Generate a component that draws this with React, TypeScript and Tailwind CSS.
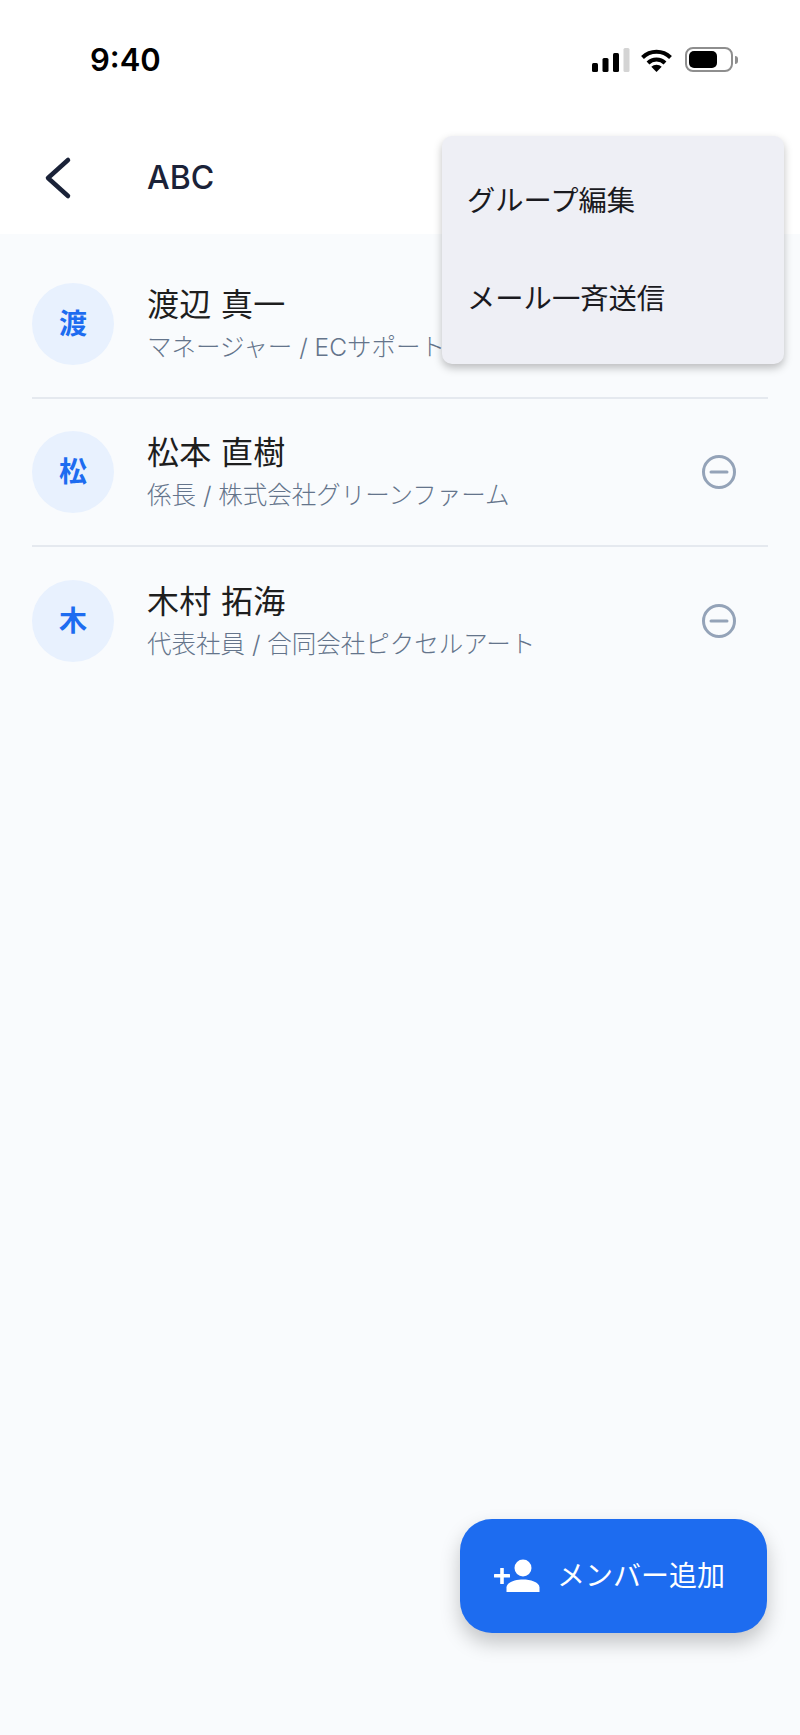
import React from 'react';

const members = [
    { initial: '渡', name: '渡辺 真一', role: 'マネージャー / ECサポート株式会社' },
    { initial: '松', name: '松本 直樹', role: '係長 / 株式会社グリーンファーム' },
    { initial: '木', name: '木村 拓海', role: '代表社員 / 合同会社ピクセルアート' },
];

const StatusIcons = () => (
    <div className="flex items-center">
        <svg width="38" height="24" viewBox="0 0 38 24">
            <rect x="0" y="15" width="6" height="9" rx="1.5" fill="#000" />
            <rect x="10.5" y="10" width="6" height="14" rx="1.5" fill="#000" />
            <rect x="21" y="5" width="6" height="19" rx="1.5" fill="#000" />
            <rect x="31.5" y="0" width="6" height="24" rx="1.5" fill="#d4d4d4" />
        </svg>
        <svg className="ml-[10px]" width="33" height="24" viewBox="0 0 32 24" fill="none">
            <path d="M2 9.5 A20 20 0 0 1 30 9.5" stroke="#000" strokeWidth="4" />
            <path d="M7.5 15 A12 12 0 0 1 24.500 15" stroke="#000" strokeWidth="4" />
            <path d="M16 24 L10.800 18.800 A7.500 7.500 0 0 1 21.200 18.800 Z" fill="#000" />
        </svg>
        <div className="ml-[12px] flex items-center">
            <div className="h-[25px] w-[48px] rounded-[8px] border-2 border-[#8e8e8e] p-[2px]">
                <div className="h-full w-[28px] rounded-[5px] bg-black" />
            </div>
            <div className="ml-[2px] h-[8px] w-[3px] rounded-r-full bg-[#8e8e8e]" />
        </div>
    </div>
);

const MinusCircle = () => (
    <svg width="36" height="36" viewBox="0 0 36 36" fill="none" stroke="#94a3b8" strokeWidth="3" strokeLinecap="round">
        <circle cx="18" cy="18" r="15.500" />
        <path d="M10 18 H26" />
    </svg>
);

const PersonAdd = () => (
    <svg width="46" height="34" viewBox="0 0 46 34" fill="#fff">
        <rect x="0" y="15" width="16" height="3.600" rx="0.500" />
        <rect x="6.200" y="9" width="3.600" height="16" rx="0.500" />
        <circle cx="29" cy="9" r="8.500" />
        <path d="M12.500 33 V28.500 C12.500 23 22 20.500 29 20.500 C36 20.500 45.500 23 45.500 28.500 V33 Z" />
    </svg>
);

export default function App() {
    return (
        <div className="relative h-[1735px] w-[800px] overflow-hidden bg-[#f9fbfd] font-['Inter','Noto_Sans_CJK_JP',sans-serif]">
            <header className="bg-white">
                <div className="flex h-[120px] items-start justify-between pt-[47px] pl-[90px] pr-[62px]">
                    <span className="text-[31px] leading-[26px] font-semibold text-black">9:40</span>
                    <StatusIcons />
                </div>
                <div className="flex h-[114px] items-center pt-[2px]">
                    <svg className="ml-[42px]" width="30" height="46" viewBox="0 0 30 46" fill="none" stroke="#1a2238" strokeWidth="4.500" strokeLinecap="round" strokeLinejoin="round">
                        <path d="M26 5 L6 23 L26 41" />
                    </svg>
                    <h1 className="ml-[75px] text-[32px] font-medium text-[#1a2238]">ABC</h1>
                </div>
            </header>

            <ul className="pt-[17px]">
                {members.map((m, i) => (
                    <li
                        key={m.name}
                        className={`mx-8 flex h-[148px] items-center ${i < members.length - 1 ? 'border-b-2 border-[#e5e9ef]' : ''}`}
                    >
                        <div className="flex h-[82px] w-[82px] shrink-0 items-center justify-center rounded-full bg-[#e8f1fe] text-[28px] font-semibold text-[#1d6cf0]">
                            {m.initial}
                        </div>
                        <div className="ml-[33px] min-w-0 flex-1">
                            <div className="-mt-[3px] text-[32px] leading-[44px] tracking-[0.01em] text-[#1e1e1e]">{m.name}</div>
                            <div className="mt-[4px] text-[24.5px] leading-[32px] font-light text-[#64748b]">{m.role}</div>
                        </div>
                        <div className="mr-[31px]">
                            <MinusCircle />
                        </div>
                    </li>
                ))}
            </ul>

            <div className="absolute left-[442px] top-[136px] flex h-[228px] w-[342px] flex-col justify-center gap-[42px] rounded-[10px] bg-[#eeeff5] pl-[25px] shadow-[0_4px_8px_rgba(0,0,0,0.25)]">
                <div className="text-[28.3px] leading-[56px] text-[#1a1a1f]">グループ編集</div>
                <div className="text-[28.3px] leading-[56px] text-[#1a1a1f]">メール一斉送信</div>
            </div>

            <button className="absolute left-[460px] top-[1519px] flex h-[114px] w-[307px] items-center rounded-[32px] bg-[#1d6cf0] pl-[34px] text-[28px] text-white shadow-[0_10px_20px_rgba(0,0,0,0.22)]">
                <PersonAdd />
                <span className="ml-[17px]">メンバー追加</span>
            </button>
        </div>
    );
}
